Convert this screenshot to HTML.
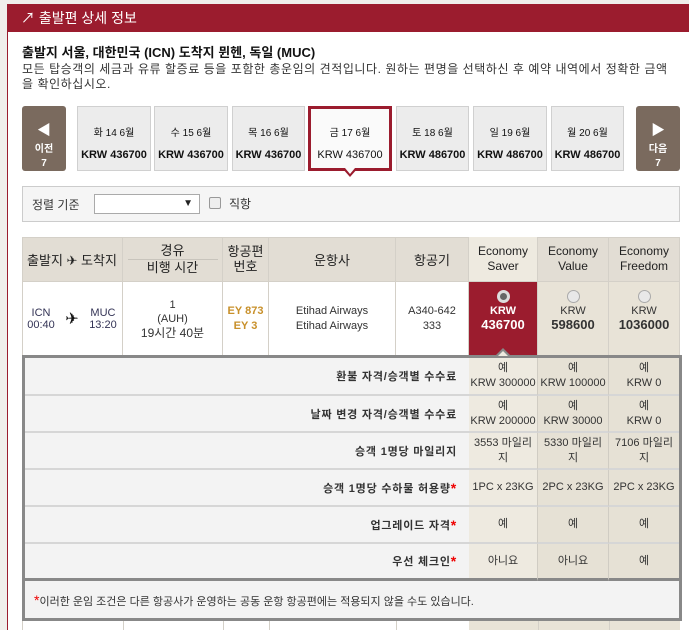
<!DOCTYPE html>
<html><head><meta charset="utf-8"><style>
*{margin:0;padding:0;box-sizing:border-box}
body{width:689px;height:630px;overflow:hidden;background:#fff;font-family:"Liberation Sans","Noto Sans CJK KR",sans-serif;position:relative;color:#222}
.a{position:absolute}
.date{position:absolute;top:106px;height:65px;background:#ececec;border:1px solid #d0d0d0;font-size:11px;text-align:center;color:#111}
.date .d{position:absolute;top:17px;width:100%;font-size:10px}
.date .p{position:absolute;top:42px;width:100%;font-weight:bold;font-size:11px}
.nav{position:absolute;top:106px;height:65px;width:44px;background:#7a6a5e;border-radius:3px;color:#fff;font-size:10px;font-weight:bold;text-align:center}
.cell{position:absolute;border-right:1px solid #d4d0c8;border-bottom:1px solid #d4d0c8;font-size:12px;text-align:center;display:flex;flex-direction:column;justify-content:center;align-items:center}
.lab{position:absolute;left:25px;width:444px;background:#f3f3f3;border-bottom:2px solid #d6d6d6;font-size:11px;font-weight:bold;text-align:right;padding-right:12px;display:flex;align-items:center;justify-content:flex-end;color:#333;letter-spacing:0.8px}
.v{position:absolute;border-bottom:2px solid #d6d6d6;border-right:1px solid #d0ccc3;font-size:11px;color:#333;text-align:center;display:flex;flex-direction:column;justify-content:center;line-height:15px}
.s{background:#eeeae0}.o{background:#e6e1d5}
.st{color:#e00;font-size:14px}
</style></head><body>
<div class="a" style="left:0;top:0;width:689px;height:630px;background:#f0eeeb"></div>
<div class="a" style="left:7px;top:4px;width:682px;height:626px;background:#fff;border-left:1px solid #9b1c2e"></div>
<div class="a" style="left:7px;top:4px;width:682px;height:28px;background:#9b1c2e;color:#fff;font-size:14px;line-height:28px;padding-left:14px">↗ 출발편 상세 정보</div>
<div class="a" style="left:22px;top:42px;font-size:13px;font-weight:bold;color:#111">출발지 서울, 대한민국 (ICN) 도착지 뮌헨, 독일 (MUC)</div>
<div class="a" style="left:22px;top:62px;width:660px;font-size:12px;line-height:15px;color:#333;letter-spacing:0.55px">모든 탑승객의 세금과 유류 할증료 등을 포함한 총운임의 견적입니다. 원하는 편명을 선택하신 후 예약 내역에서 정확한 금액<br>을 확인하십시오.</div>
<div class="nav" style="left:22px"><div style="margin-top:14px;font-size:14px">◀</div><div>이전</div><div style="margin-top:3px">7</div></div>
<div class="date" style="left:77px;width:74px"><div class="d">화 14 6월</div><div class="p">KRW 436700</div></div>
<div class="date" style="left:154px;width:74px"><div class="d">수 15 6월</div><div class="p">KRW 436700</div></div>
<div class="date" style="left:232px;width:73px"><div class="d">목 16 6월</div><div class="p">KRW 436700</div></div>
<div class="date" style="left:308px;width:84px;background:#fafafa;border:3px solid #9b1c2e"><div class="d" style="top:15px">금 17 6월</div><div class="p" style="top:40px;font-weight:normal">KRW 436700</div></div>
<div class="a" style="left:342px;top:168px;width:0;height:0;border-left:8px solid transparent;border-right:8px solid transparent;border-top:9px solid #9b1c2e"></div>
<div class="a" style="left:345px;top:168px;width:0;height:0;border-left:5px solid transparent;border-right:5px solid transparent;border-top:6px solid #fafafa"></div>
<div class="date" style="left:396px;width:73px"><div class="d">토 18 6월</div><div class="p">KRW 486700</div></div>
<div class="date" style="left:473px;width:74px"><div class="d">일 19 6월</div><div class="p">KRW 486700</div></div>
<div class="date" style="left:551px;width:73px"><div class="d">월 20 6월</div><div class="p">KRW 486700</div></div>
<div class="nav" style="left:636px"><div style="margin-top:14px;font-size:14px">▶</div><div>다음</div><div style="margin-top:3px">7</div></div>
<div class="a" style="left:22px;top:186px;width:658px;height:36px;background:#f5f5f5;border:1px solid #ccc"></div>
<div class="a" style="left:32px;top:196px;font-size:12px;color:#333">정렬 기준</div>
<div class="a" style="left:94px;top:194px;width:106px;height:20px;background:#fff;border:1px solid #aaa;font-size:10px;text-align:right;padding:3px 6px 0 0">▼</div>
<div class="a" style="left:209px;top:197px;width:12px;height:12px;border:1px solid #999;border-radius:2px;background:#eee"></div>
<div class="a" style="left:229px;top:195px;font-size:12px;color:#333">직항</div>
<div class="a" style="left:22px;top:237px;width:658px;height:45px;background:#e2ddd4;border:1px solid #d4d0c8"></div>
<div class="cell" style="left:22px;top:237px;width:101px;height:45px;font-size:13px">출발지 ✈ 도착지</div>
<div class="cell" style="left:123px;top:237px;width:100px;height:45px;font-size:13px;line-height:16px"><div style="border-bottom:1px solid #c8c4bc;width:90px">경유</div><div>비행 시간</div></div>
<div class="cell" style="left:223px;top:237px;width:46px;height:45px;font-size:13px;line-height:15px">항공편<br>번호</div>
<div class="cell" style="left:269px;top:237px;width:127px;height:45px;font-size:13px">운항사</div>
<div class="cell" style="left:396px;top:237px;width:73px;height:45px;font-size:13px">항공기</div>
<div class="cell" style="left:469px;top:237px;width:69px;height:45px;background:#eeeae0;line-height:15px">Economy<br>Saver</div>
<div class="cell" style="left:538px;top:237px;width:71px;height:45px;line-height:15px">Economy<br>Value</div>
<div class="cell" style="left:609px;top:237px;width:71px;height:45px;line-height:15px">Economy<br>Freedom</div>
<div class="a" style="left:22px;top:282px;width:1px;height:348px;background:#d4d0c8"></div>
<div class="cell" style="left:22px;top:282px;width:101px;height:74px;font-size:11px;color:#335;flex-direction:row;justify-content:space-around"><div>ICN<br>00:40</div><div style="font-size:16px;color:#111">✈</div><div>MUC<br>13:20</div></div>
<div class="cell" style="left:123px;top:282px;width:100px;height:74px;font-size:11px;line-height:14px;color:#333">1<br>(AUH)<br><span style="font-size:12px">19시간 40분</span></div>
<div class="cell" style="left:223px;top:282px;width:46px;height:74px;font-size:11px;font-weight:bold;color:#c8902a;line-height:15px">EY 873<br>EY 3</div>
<div class="cell" style="left:269px;top:282px;width:127px;height:74px;font-size:11px;color:#333;line-height:15px">Etihad Airways<br>Etihad Airways</div>
<div class="cell" style="left:396px;top:282px;width:73px;height:74px;font-size:11px;color:#333;line-height:15px;justify-content:flex-start;padding-top:22px">A340-642<br>333</div>
<div class="cell" style="left:469px;top:282px;width:69px;height:74px;background:#9b1c2e;color:#fff;font-size:11px;font-weight:bold;justify-content:flex-start;padding-top:8px;line-height:14px"><div style="width:13px;height:13px;border-radius:50%;background:#666;border:3px solid #ddd;margin-bottom:1px"></div>KRW<br><span style="font-size:13px">436700</span></div>
<div class="cell" style="left:538px;top:282px;width:71px;height:74px;background:#e8e3d7;color:#333;font-size:11px;justify-content:flex-start;padding-top:8px;line-height:14px"><div style="width:13px;height:13px;border-radius:50%;background:#e8e8e8;border:1px solid #aaa;margin-bottom:1px"></div>KRW<br><b style="font-size:13px">598600</b></div>
<div class="cell" style="left:609px;top:282px;width:71px;height:74px;background:#e8e3d7;color:#333;font-size:11px;justify-content:flex-start;padding-top:8px;line-height:14px"><div style="width:13px;height:13px;border-radius:50%;background:#e8e8e8;border:1px solid #aaa;margin-bottom:1px"></div>KRW<br><b style="font-size:13px">1036000</b></div>
<div class="a" style="left:22px;top:355px;width:660px;height:266px;border:3px solid #888;background:#f3f3f3"></div>
<div class="a" style="left:496px;top:348px;width:0;height:0;border-left:7px solid transparent;border-right:7px solid transparent;border-bottom:7px solid #888"></div>
<div class="a" style="left:498px;top:351px;width:0;height:0;border-left:5px solid transparent;border-right:5px solid transparent;border-bottom:5px solid #eeeae0"></div>
<div class="lab" style="top:358px;height:38px">환불 자격/승객별 수수료</div>
<div class="v s" style="left:469px;top:358px;width:69px;height:38px">예<br>KRW 300000</div>
<div class="v o" style="left:538px;top:358px;width:71px;height:38px">예<br>KRW 100000</div>
<div class="v o" style="left:609px;top:358px;width:70px;height:38px;border-right:0">예<br>KRW 0</div>
<div class="lab" style="top:396px;height:37px">날짜 변경 자격/승객별 수수료</div>
<div class="v s" style="left:469px;top:396px;width:69px;height:37px">예<br>KRW 200000</div>
<div class="v o" style="left:538px;top:396px;width:71px;height:37px">예<br>KRW 30000</div>
<div class="v o" style="left:609px;top:396px;width:70px;height:37px;border-right:0">예<br>KRW 0</div>
<div class="lab" style="top:433px;height:37px">승객 1명당 마일리지</div>
<div class="v s" style="left:469px;top:433px;width:69px;height:37px">3553 마일리<br>지</div>
<div class="v o" style="left:538px;top:433px;width:71px;height:37px">5330 마일리<br>지</div>
<div class="v o" style="left:609px;top:433px;width:70px;height:37px;border-right:0">7106 마일리<br>지</div>
<div class="lab" style="top:470px;height:37px">승객 1명당 수하물 허용량<span class="st">*</span></div>
<div class="v s" style="left:469px;top:470px;width:69px;height:37px">1PC x 23KG</div>
<div class="v o" style="left:538px;top:470px;width:71px;height:37px">2PC x 23KG</div>
<div class="v o" style="left:609px;top:470px;width:70px;height:37px;border-right:0">2PC x 23KG</div>
<div class="lab" style="top:507px;height:37px">업그레이드 자격 <span class="st">*</span></div>
<div class="v s" style="left:469px;top:507px;width:69px;height:37px">예</div>
<div class="v o" style="left:538px;top:507px;width:71px;height:37px">예</div>
<div class="v o" style="left:609px;top:507px;width:70px;height:37px;border-right:0">예</div>
<div class="lab" style="top:544px;height:37px;border-bottom:3px solid #888">우선 체크인 <span class="st">*</span></div>
<div class="v s" style="left:469px;top:544px;width:69px;height:37px;border-bottom:3px solid #888">아니요</div>
<div class="v o" style="left:538px;top:544px;width:71px;height:37px;border-bottom:3px solid #888">아니요</div>
<div class="v o" style="left:609px;top:544px;width:70px;height:37px;border-bottom:3px solid #888;border-right:0">예</div>
<div class="a" style="left:34px;top:592px;font-size:11px;color:#333"><span class="st">*</span>이러한 운임 조건은 다른 항공사가 운영하는 공동 운항 항공편에는 적용되지 않을 수도 있습니다.</div>
<div class="a" style="left:123px;top:621px;width:1px;height:9px;background:#d4d0c8"></div>
<div class="a" style="left:223px;top:621px;width:1px;height:9px;background:#d4d0c8"></div>
<div class="a" style="left:269px;top:621px;width:1px;height:9px;background:#d4d0c8"></div>
<div class="a" style="left:396px;top:621px;width:1px;height:9px;background:#d4d0c8"></div>
<div class="a" style="left:469px;top:621px;width:211px;height:9px;background:#e8e3d7"></div>
<div class="a" style="left:538px;top:621px;width:1px;height:9px;background:#d4d0c8"></div>
<div class="a" style="left:609px;top:621px;width:1px;height:9px;background:#d4d0c8"></div>
</body></html>
